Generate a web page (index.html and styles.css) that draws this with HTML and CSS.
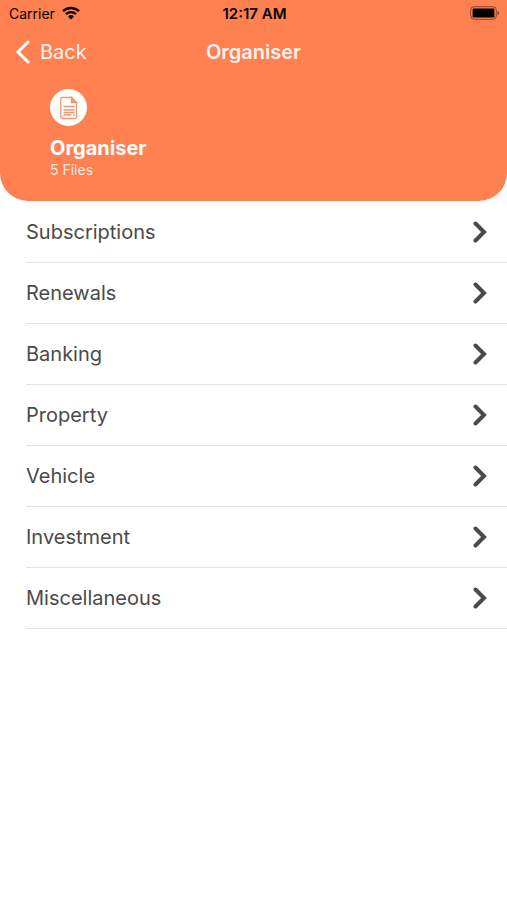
FILE: index.html
```html
<!DOCTYPE html>
<html lang="en">
<head>
    <meta charset="UTF-8">
    <meta name="viewport" content="width=device-width, initial-scale=1.0">
    <title>Organiser</title>
    <link rel="stylesheet" href="styles.css">
</head>
<body>
    <header class="header">
        <div class="status-bar">
            <div class="carrier">
                <span>Carrier</span>
                <svg class="wifi" viewBox="0 0 18 14" aria-hidden="true">
                    <path d="M1 5.2a11.5 11.5 0 0 1 16 0M3.9 8.2a7.3 7.3 0 0 1 10.2 0" fill="none" stroke="#000" stroke-width="2.4"/>
                    <path d="M9 13.4 6 10.4a4.3 4.3 0 0 1 6 0z"/>
                </svg>
            </div>
            <span class="time">12:17 AM</span>
            <svg class="battery" viewBox="0 0 30 14" aria-hidden="true">
                <rect x="0.7" y="0.7" width="25.6" height="12.6" rx="3.5" fill="none" stroke="#000" stroke-opacity="0.45"/>
                <rect x="2.6" y="2.5" width="21.8" height="9" rx="1.2"/>
                <path d="M27.4 4.8c2.4.8 2.4 3.6 0 4.4z" fill-opacity="0.45"/>
            </svg>
        </div>

        <nav class="nav-bar">
            <a class="back" href="#">
                <svg class="back-icon" viewBox="0 0 16 24" aria-hidden="true">
                    <path d="M13 2 3 12l10 10"/>
                </svg>
                Back
            </a>
            <h1>Organiser</h1>
        </nav>

        <div class="folder">
            <div class="folder-icon">
                <svg viewBox="0 0 20 24" aria-hidden="true">
                    <path d="M3 1.5h9.5l5 5v14.8a1.2 1.2 0 0 1-1.2 1.2H3a1.2 1.2 0 0 1-1.2-1.2V2.7A1.2 1.2 0 0 1 3 1.5z"/>
                    <path class="fold" d="M12.5 1.5v5h5z"/>
                    <path d="M4.5 10.5h11M4.5 14h11M4.5 16.5h11M4.5 19h8M14 19h1.5"/>
                </svg>
            </div>
            <h2>Organiser</h2>
            <p>5 Files</p>
        </div>
    </header>

    <main>
        <ul class="category-list">
            <li><a href="#">Subscriptions <svg class="chevron" viewBox="0 0 14 22" aria-hidden="true"><path d="m2.5 2.5 8.5 8.5-8.5 8.5"/></svg></a></li>
            <li><a href="#">Renewals <svg class="chevron" viewBox="0 0 14 22" aria-hidden="true"><path d="m2.5 2.5 8.5 8.5-8.5 8.5"/></svg></a></li>
            <li><a href="#">Banking <svg class="chevron" viewBox="0 0 14 22" aria-hidden="true"><path d="m2.5 2.5 8.5 8.5-8.5 8.5"/></svg></a></li>
            <li><a href="#">Property <svg class="chevron" viewBox="0 0 14 22" aria-hidden="true"><path d="m2.5 2.5 8.5 8.5-8.5 8.5"/></svg></a></li>
            <li><a href="#">Vehicle <svg class="chevron" viewBox="0 0 14 22" aria-hidden="true"><path d="m2.5 2.5 8.5 8.5-8.5 8.5"/></svg></a></li>
            <li><a href="#">Investment <svg class="chevron" viewBox="0 0 14 22" aria-hidden="true"><path d="m2.5 2.5 8.5 8.5-8.5 8.5"/></svg></a></li>
            <li><a href="#">Miscellaneous <svg class="chevron" viewBox="0 0 14 22" aria-hidden="true"><path d="m2.5 2.5 8.5 8.5-8.5 8.5"/></svg></a></li>
        </ul>
    </main>
</body>
</html>
```
FILE: styles.css
```css
* {
    margin: 0;
    padding: 0;
    box-sizing: border-box;
}

body {
    background-color: #fff;
    color: #4a4a4a;
    font-family: Inter, "Liberation Sans", sans-serif;
}

a {
    color: inherit;
    text-decoration: none;
}

.header {
    background-color: #ff8050;
    color: #fff;
    border-radius: 0 0 28px 28px;
    padding-bottom: 22px;
}

.status-bar {
    display: grid;
    grid-template-columns: 1fr auto 1fr;
    align-items: center;
    height: 26px;
    padding: 0 7px 0 9px;
    color: #000;
    font-size: 14px;
}

.carrier {
    display: flex;
    align-items: center;
    gap: 7px;
}

.wifi {
    width: 18px;
    height: 14px;
}

.time {
    font-size: 15px;
    font-weight: 600;
}

.battery {
    width: 30px;
    height: 14px;
    justify-self: end;
}

.nav-bar {
    display: grid;
    grid-template-columns: 1fr auto 1fr;
    align-items: center;
    height: 52px;
    padding: 0 15px;
}

.back {
    display: flex;
    align-items: center;
    gap: 9px;
    color: #fff4ef;
    font-size: 20px;
}

.back-icon {
    width: 16px;
    height: 24px;
    fill: none;
    stroke: #fff;
    stroke-width: 3;
    stroke-linecap: round;
}

.nav-bar h1 {
    color: #fff4ef;
    font-size: 20px;
    font-weight: 600;
}

.folder {
    padding: 11px 50px 0;
}

.folder-icon {
    display: flex;
    align-items: center;
    justify-content: center;
    width: 37px;
    height: 37px;
    margin-bottom: 9px;
    border-radius: 50%;
    background-color: #fff;
}

.folder-icon svg {
    width: 20px;
    height: 24px;
    fill: none;
    stroke: #f0976c;
    stroke-width: 1.3;
}

.folder-icon .fold {
    fill: #f0976c;
}

.folder h2 {
    font-size: 20px;
    font-weight: 700;
    line-height: 26px;
}

.folder p {
    color: #ffe9df;
    font-size: 14px;
    line-height: 18px;
}

.category-list {
    list-style: none;
    padding: 1px 0 0 26px;
}

.category-list a {
    display: flex;
    align-items: center;
    justify-content: space-between;
    height: 61px;
    padding-right: 20px;
    border-bottom: 1px solid #e3e3e3;
    font-size: 20px;
}

.chevron {
    width: 14px;
    height: 22px;
    fill: none;
    stroke: #4a4a4a;
    stroke-width: 4;
    stroke-linecap: round;
}
```
